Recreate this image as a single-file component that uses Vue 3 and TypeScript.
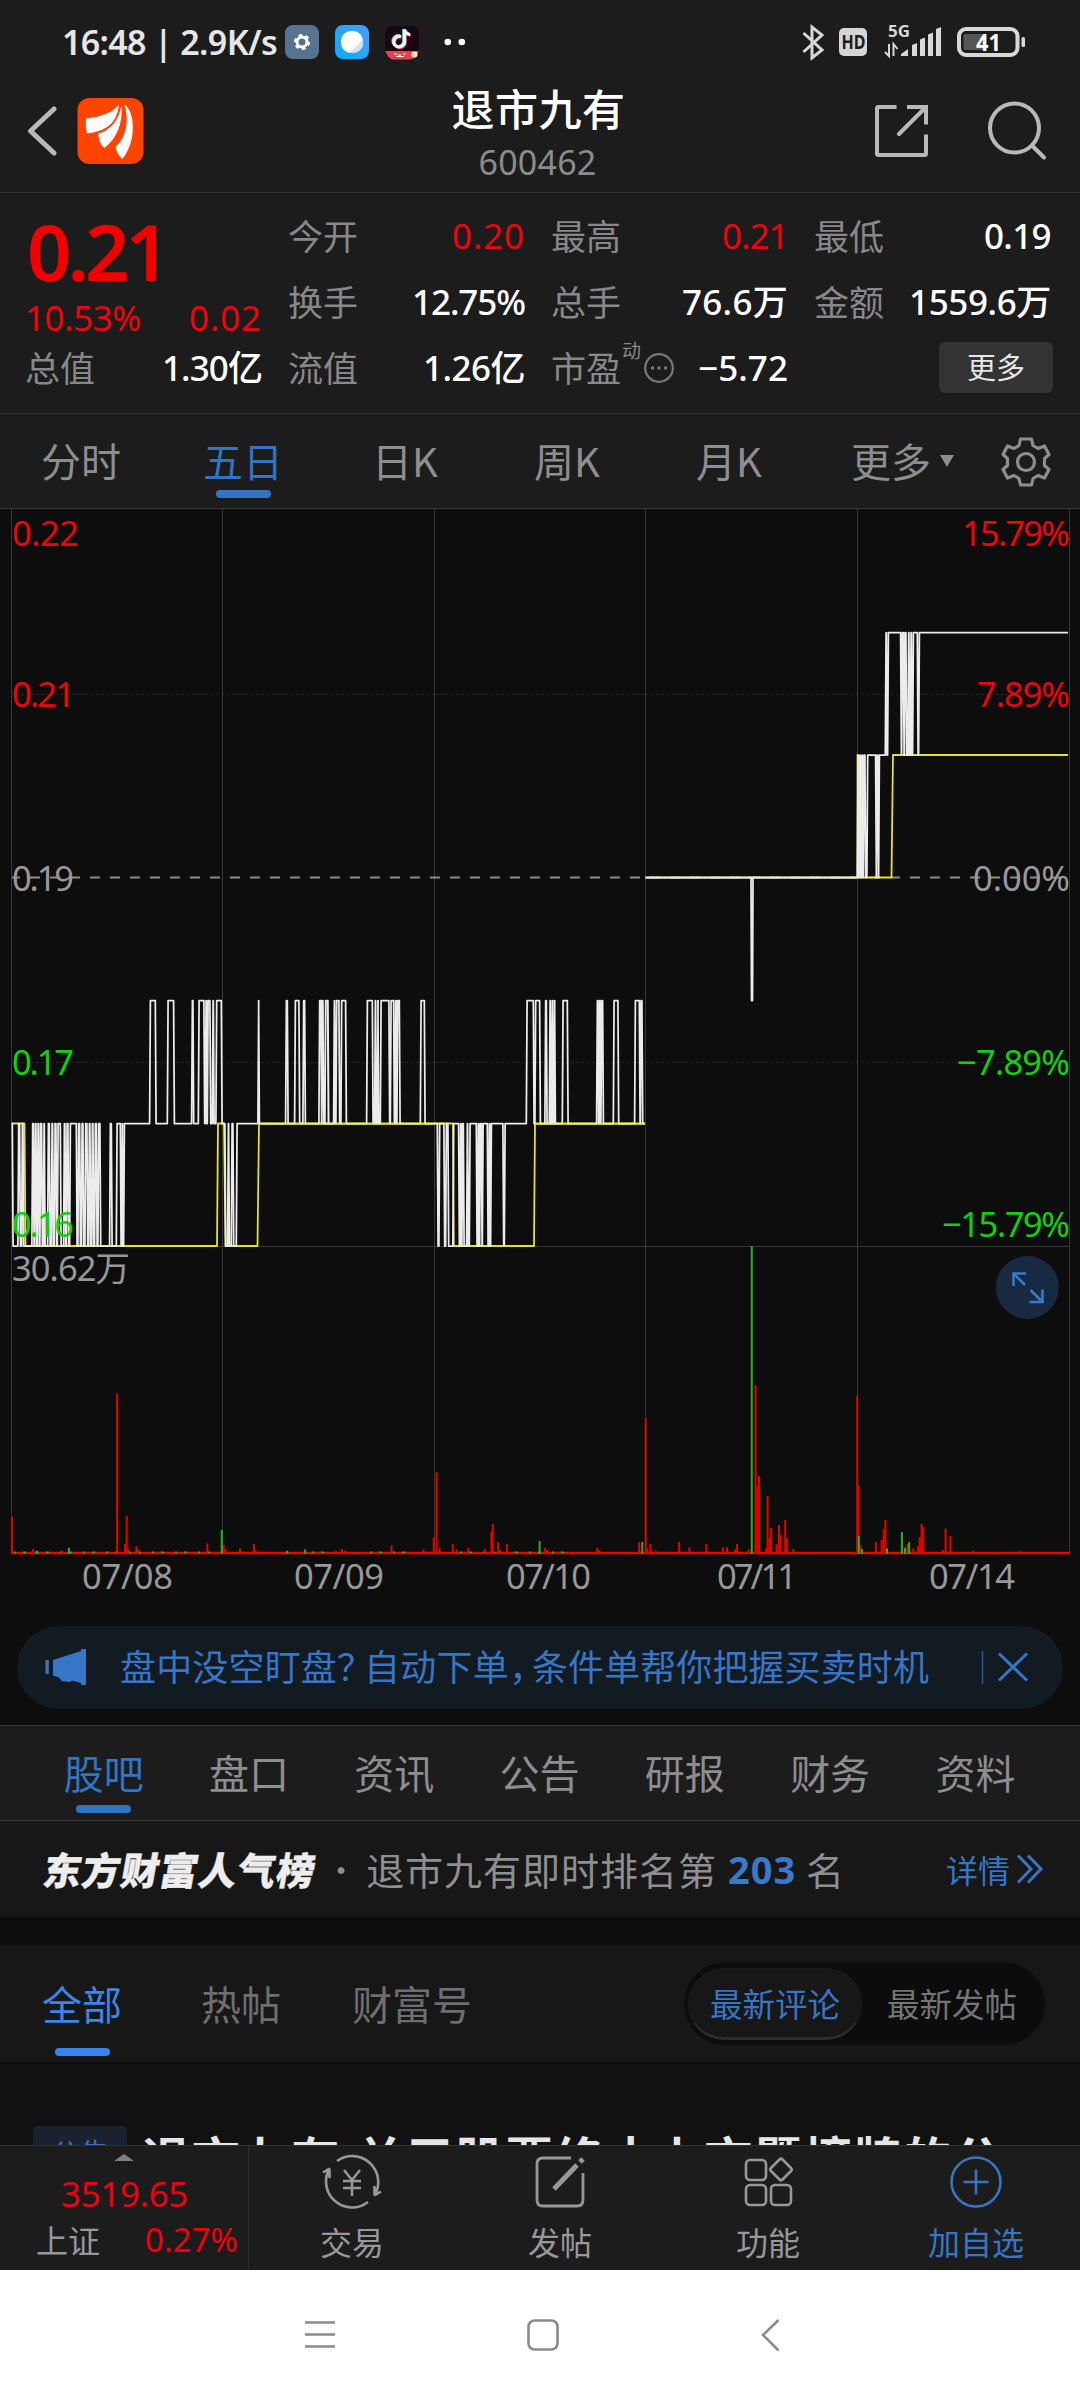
<script setup lang="ts">
interface Bar { x: number; y: number; up: boolean }
interface Label { text: string; x: number; y: number; w: number; tone: string; end?: boolean }

// Spreads the letters of an element so that its line has the given width.
const vFit = {
  mounted(el: HTMLElement, binding: { value: number }) {
    const natural = el.getBoundingClientRect().width
    const count = Array.from(el.textContent ?? '').length
    if (count > 0) el.style.letterSpacing = `${((binding.value - natural) / count).toFixed(3)}px`
  },
}

const periods = ['分时', '五日', '日K', '周K', '月K']
const sections = ['股吧', '盘口', '资讯', '公告', '研报', '财务', '资料']

// Price levels of the chart, in page pixels
const TOP = 632.5
const UPPER = 755
const ZERO = 877.5
const HIGH = 1000.5
const MID = 1123.5
const LOW = 1246

// Square wave that flips between two levels at every given x.
function wave(a: number, b: number, flips: number[]): string {
  let level = a
  return flips
    .map((x) => {
      const from = level
      level = level === a ? b : a
      const lean = 0.4
      return `L${(x - lean).toFixed(1)} ${from}L${(x + lean).toFixed(1)} ${level}`
    })
    .join('')
}
const at = (origin: number, xs: number[]): number[] => xs.map((x) => origin + x / 3)

const day12 =
  `M11.5 ${MID}` +
  wave(MID, LOW, at(0, [38, 55, 60, 66, 70, 97, 101, 105, 109, 113, 117, 121, 126, 131, 134, 144, 149, 155, 159, 164, 169, 173, 182, 192, 196, 200, 205, 210, 230, 235, 240, 245, 250, 256, 262, 267, 271, 276, 280, 285, 290, 295, 301, 330, 335, 350, 362, 366, 368, 372])) +
  wave(MID, HIGH, at(0, [450, 467, 503, 522, 576, 580, 596, 613, 617, 620, 623, 631, 638, 641, 649, 665])) +
  wave(MID, LOW, at(0, [676, 684, 687, 695, 700, 710])) +
  wave(MID, HIGH, at(0, [775, 777, 858, 863, 885, 898, 910, 915, 958, 964, 966, 970, 976, 984])) +
  wave(MID, HIGH, at(320, [16, 25, 42, 45, 49, 58, 64, 78, 141, 158, 165, 168, 173, 175, 182, 208, 212, 222, 226, 229, 232, 239, 302, 314])) +
  `L434 ${MID}`
const day3 =
  `M434 ${MID}` +
  wave(MID, LOW, at(320, [353, 358, 373, 378, 385, 400, 417, 421, 424, 427, 431, 441, 444, 449, 470, 474, 477, 480, 485, 488, 503, 507, 510, 513, 550, 554])) +
  wave(MID, HIGH, at(320, [620, 641, 646, 660, 676, 680, 689, 692, 696, 699, 703, 705, 728, 743, 831, 835, 838, 841, 844, 849, 881, 895, 945, 959, 962, 967])) +
  `L645 ${MID}`
const day45 =
  `M645.5 ${ZERO}L751 ${ZERO}L751.5 ${HIGH}L752.5 ${HIGH}L753 ${ZERO}` +
  wave(ZERO, UPPER, at(620, [713, 716, 719, 722, 725, 728, 731, 736, 742, 768, 770, 774, 777])) +
  `L885 ${UPPER}` +
  wave(UPPER, TOP, at(620, [797, 800, 804, 843, 846, 851, 854, 859, 865, 868, 872, 875, 879, 893, 897])) +
  `L1068 ${TOP}`
const average =
  `M11.5 ${MID}H24.5L25.5 ${LOW}H217L218 ${MID}H224L225.5 ${LOW}H257.5L259 ${MID}H453L453.8 ${LOW}H534L535 ${MID}H645` +
  `M857.5 ${ZERO}V${UPPER}L858.5 ${ZERO}H891.5L893 ${UPPER}H1068`

const left = (list: number[][], up: boolean): Bar[] =>
  list.map(([x, y]) => ({ x: x / 2.904, y: 1230 + y / 3, up }))
const right = (list: number[][], up: boolean): Bar[] =>
  list.map(([x, y]) => ({ x: 540 + x / 2.904, y: 1230 + y / 3, up }))

const bars: Bar[] = [
  ...left([[35, 860], [340, 490], [368, 857], [363, 942], [372, 957], [396, 948], [400, 957], [602, 940], [650, 945], [655, 957], [697, 955], [738, 942], [742, 960], [96, 957], [180, 962], [975, 962], [993, 957], [1002, 962], [1137, 946], [1230, 958], [1260, 922], [1268, 727], [1277, 953], [1315, 942], [1326, 958], [1360, 953], [1408, 957], [1427, 905], [1431, 882], [1447, 936], [1452, 960], [1472, 942]], true),
  ...left([[644, 900], [200, 953], [106, 962], [886, 958], [834, 962], [1567, 933]], false),
  ...right([[15, 953], [21, 960], [166, 953], [172, 960], [288, 936], [307, 565], [312, 955], [321, 942], [336, 962], [404, 936], [434, 952], [483, 942], [531, 952], [543, 952], [572, 942], [567, 958], [606, 958], [626, 466], [631, 770], [636, 738], [657, 955], [661, 798], [666, 925], [671, 894], [687, 942], [694, 885], [699, 915], [712, 870], [717, 925], [736, 957], [921, 497], [925, 765], [931, 945], [976, 936], [992, 930], [998, 898], [1003, 870], [1067, 942], [1084, 955], [1098, 948], [1103, 922], [1108, 882], [1113, 890], [1170, 960], [1178, 896], [1192, 918], [1258, 962], [1395, 962]], true),
  ...right([[297, 936], [615, 48], [926, 918], [935, 957], [1008, 955], [1051, 906], [1060, 953], [1072, 936]], false),
]

const labels: Label[] = [
  { text: '0.22', x: 12, y: 546, w: 67, tone: 'red' },
  { text: '0.21', x: 12, y: 707, w: 63, tone: 'red' },
  { text: '0.19', x: 12, y: 891, w: 62, tone: 'grey' },
  { text: '0.17', x: 12, y: 1075, w: 62, tone: 'green' },
  { text: '0.16', x: 12, y: 1237, w: 62, tone: 'green' },
  { text: '30.62万', x: 12, y: 1281, w: 118, tone: 'grey' },
  { text: '15.79%', x: 1070, y: 546, w: 108, tone: 'red', end: true },
  { text: '7.89%', x: 1070, y: 707, w: 93, tone: 'red', end: true },
  { text: '0.00%', x: 1070, y: 891, w: 97, tone: 'grey', end: true },
  { text: '−7.89%', x: 1070, y: 1075, w: 113, tone: 'green', end: true },
  { text: '−15.79%', x: 1070, y: 1237, w: 128, tone: 'green', end: true },
  { text: '07/08', x: 82, y: 1589, w: 91, tone: 'date' },
  { text: '07/09', x: 294, y: 1589, w: 90, tone: 'date' },
  { text: '07/10', x: 506, y: 1589, w: 85, tone: 'date' },
  { text: '07/11', x: 717, y: 1589, w: 80, tone: 'date' },
  { text: '07/14', x: 929, y: 1589, w: 86, tone: 'date' },
]
const days = [11.5, 222.5, 434.5, 645.5, 857.5, 1069.5]
</script>

<template>
  <div class="screen">
    <div class="status">
      <span class="clock" v-fit="215">16:48 | 2.9K/s</span>
      <svg class="tray" width="186" height="42" viewBox="280 21 186 42">
        <rect x="285" y="25" width="34" height="34" rx="8" fill="#57748f" />
        <circle cx="302" cy="42" r="5" fill="none" stroke="#fff" stroke-width="3" />
        <circle cx="302" cy="42" r="6.9" fill="none" stroke="#fff" stroke-width="2.4" stroke-dasharray="3.6 3.6" />
        <defs>
          <linearGradient id="sky" x1="0" y1="1" x2="1" y2="0">
            <stop offset="0" stop-color="#06adff" /><stop offset="1" stop-color="#4b9dff" />
          </linearGradient>
        </defs>
        <rect x="335" y="25" width="34" height="34" rx="8" fill="url(#sky)" />
        <rect x="341" y="31" width="22" height="22" rx="10" fill="#fff" />
        <path d="M363 38v5a10 10 0 0 1-10 10h-6c8-3 11-8 16-15z" fill="#cfe2f5" />
        <rect x="385" y="26" width="34" height="33" rx="8" fill="#1a0513" />
        <g fill="none" stroke-width="3">
          <path d="M401 36.500a5.400 5.400 0 1 0 3.600 5.200v-12c1 3 3 4.600 5.500 4.800" stroke="#ff2d5a" transform="translate(.8 .8)" />
          <path d="M401 36.500a5.400 5.400 0 1 0 3.600 5.200v-12c1 3 3 4.600 5.500 4.800" stroke="#37e7e7" transform="translate(-1 -.6)" />
          <path d="M401 36.500a5.400 5.400 0 1 0 3.600 5.200v-12c1 3 3 4.600 5.500 4.800" stroke="#fff" />
        </g>
        <path d="M385 51h34l-4 7-5 1.500h-18l-4-3z" fill="#e8404e" />
        <path d="M394 54h3m1 1h3m2-1h3m-10 2.500h8" stroke="#fff" stroke-width="1" />
        <circle cx="414.500" cy="54.500" r="3" fill="#ffe9c0" />
        <circle cx="447.800" cy="42" r="3.300" fill="#fff" /><circle cx="461.800" cy="42" r="3.300" fill="#fff" />
      </svg>
      <svg class="signals" width="230" height="42" viewBox="800 21 230 42">
        <path d="M803.500 33l18.500 17-10 8V27l10 8-18.500 17" fill="none" stroke="#d8d8d8" stroke-width="3" />
        <rect x="839" y="28" width="28" height="28" rx="5" fill="#d5d5d5" />
        <text class="hd" x="841.500" y="49.200" textLength="24" lengthAdjust="spacingAndGlyphs">HD</text>
        <text class="five" x="888" y="37" textLength="22" lengthAdjust="spacingAndGlyphs">5G</text>
        <path d="M885 52l4 4V44M893.500 56V44l4 5" fill="none" stroke="#d8d8d8" stroke-width="2" />
        <path d="M901 56v-2l7-5v7zM912 56V45l5-2v13zM920 56V39.500l5-2V56zM928 56V34.500l5-2V56zM936 56V29l5-2v29z" fill="#d8d8d8" />
        <rect x="959" y="29" width="58.500" height="26" rx="7" fill="none" stroke="#d8d8d8" stroke-width="4" />
        <rect x="963.500" y="34" width="21" height="16" rx="2" fill="#565656" />
        <rect x="1021.500" y="37" width="3.500" height="10" rx="1.500" fill="#d8d8d8" />
        <text class="charge" x="976" y="50.500" textLength="25" lengthAdjust="spacingAndGlyphs">41</text>
      </svg>
    </div>

    <header class="head">
      <svg width="120" height="80" viewBox="27 91 120 80">
        <path d="M54 109L30.500 131 54 153" fill="none" stroke="#b9b9b9" stroke-width="5" stroke-linecap="round" stroke-linejoin="round" />
        <rect x="77.500" y="98" width="66" height="66" rx="12" fill="#ff4300" />
        <path d="M86 118.500Q110 116 119 104.500C117 123 107 131 87 133.500Q85 126 86 118.500z" fill="#fff" />
        <path d="M121.500 104.500C123 124 117 138 104.500 148 100 144 98.500 139 98.500 133.500 111 130 119.500 120 121.500 104.500z" fill="#fff" />
        <path d="M124.500 104.500C135 111 137 141 122.500 159 119 156 116.500 152 115.500 147 126 138 129.500 121 124.500 104.500z" fill="#fff" />
      </svg>
      <div class="title">
        <h1 v-fit="174">退市九有</h1>
        <span v-fit="118">600462</span>
      </div>
      <svg width="176" height="70" viewBox="872 96 176 70" fill="none" stroke="#b9b9b9" stroke-width="4">
        <path d="M896.500 107H878.500q-1.500 0-1.500 1.500V153.500q0 1.500 1.500 1.500H924.500q1.500 0 1.500-1.500V134.500M907 107H926V124.500" />
        <path d="M926 107L899 134" stroke-linecap="round" />
        <circle cx="1014.500" cy="128" r="24.500" /><path d="M1032 145.500l12 12" stroke-linecap="round" />
      </svg>
    </header>

    <section class="quote">
      <div class="col">
        <div class="price"><b v-fit="139">0.21</b></div>
        <div class="row lower"><span class="up" v-fit="116">10.53%</span><span class="up" v-fit="73">0.02</span></div>
        <div class="row"><i>总值</i><span v-fit="100">1.30亿</span></div>
      </div>
      <div class="col">
        <div class="row"><i>今开</i><span class="up" v-fit="73">0.20</span></div>
        <div class="row"><i>换手</i><span v-fit="113">12.75%</span></div>
        <div class="row"><i>流值</i><span v-fit="102">1.26亿</span></div>
      </div>
      <div class="col">
        <div class="row"><i>最高</i><span class="up" v-fit="66">0.21</span></div>
        <div class="row"><i>总手</i><span v-fit="106">76.6万</span></div>
        <div class="row">
          <i>市盈</i><small>动</small>
          <svg width="32" height="32" viewBox="0 0 32 32"><circle cx="16" cy="16" r="13.800" fill="none" stroke="#77777a" stroke-width="2.300" /><path d="M8 14.500h3v3H8zM14.500 14.500h3v3h-3zM21 14.500h3v3h-3z" fill="#77777a" /></svg>
          <span v-fit="90">−5.72</span>
        </div>
      </div>
      <div class="col">
        <div class="row"><i>最低</i><span v-fit="67">0.19</span></div>
        <div class="row"><i>金额</i><span v-fit="142">1559.6万</span></div>
        <div class="row end"><button>更多</button></div>
      </div>
    </section>

    <nav class="periods">
      <div v-for="(p, i) in periods" :key="p" class="period" :class="{ on: i === 1 }">{{ p }}</div>
      <div class="period more">更多<em></em></div>
      <div class="gear">
        <svg width="56" height="56" viewBox="-28 -28 56 56" fill="none" stroke="#8e8e91" stroke-width="3.200" stroke-linejoin="round">
          <path d="M-5.500-23H5.500L7-16.500 12-13.500 18.500-16 23-7.500 18.500-3.500V3.500L23 7.500 18.500 16 12 13.500 7 16.500 5.500 23H-5.500L-7 16.500-12 13.500-18.500 16-23 7.500-18.500 3.500V-3.500L-23-7.500-18.500-16-12-13.500-7-16.500z" />
          <circle r="8.500" />
        </svg>
      </div>
    </nav>

    <svg class="chart" width="1080" height="1117" viewBox="0 509 1080 1117">
      <g stroke="#38383a" stroke-width="1">
        <line v-for="x in days" :key="x" :x1="x" :x2="x" y1="509" y2="1553" />
        <line x1="11" x2="1070" y1="1246.500" y2="1246.500" />
        <line x1="11" x2="1070" y1="694.500" y2="694.500" stroke="#252527" stroke-dasharray="3 2" />
        <line x1="11" x2="1070" y1="1062.500" y2="1062.500" stroke="#252527" stroke-dasharray="3 2" />
      </g>
      <line x1="12" x2="1069" :y1="ZERO" :y2="ZERO" stroke="#8c8c8c" stroke-width="2" stroke-dasharray="10 10" stroke-dashoffset="2" />
      <g fill="none" stroke-linejoin="round">
        <path :d="average" stroke="#e6df2c" stroke-width="1.800" />
        <path :d="day12 + day3 + day45" stroke="#ececec" stroke-width="1.750" />
        <path d="M259 1124.200H434M535 1124.200H645" stroke="#e6df2c" stroke-width="1" />
        <path d="M645.500 877.500H857" stroke="#f1eec0" stroke-width="2" />
      </g>
      <path d="M11 1553H1070" stroke="#f00000" stroke-width="2.400" />
      <path d="M14 1552.500H222M312 1552.500h22M370 1552.500h38M460 1552.500h110" stroke="#16b416" stroke-width="2" stroke-dasharray="2 7 3 11" />
      <line v-for="(b, i) in bars" :key="i" :x1="b.x" :x2="b.x" :y1="b.y" y2="1554" :stroke="b.up ? '#e60000' : '#22b422'" stroke-width="2" />
      <text v-for="l in labels" :key="l.text" :class="l.tone" :x="l.end ? l.x - l.w : l.x" :y="l.y" :textLength="l.w">{{ l.text }}</text>
      <circle cx="1027.300" cy="1287.500" r="31.500" fill="#182a41" />
      <path d="M1013.500 1286V1273.500H1026M1013.500 1273.500L1025 1285M1042.500 1289.500V1302H1029.500M1042.500 1302L1030.500 1290" fill="none" stroke="#3a78c8" stroke-width="2.600" />
    </svg>

    <div class="tip">
      <svg width="46" height="42" viewBox="42 1647 46 42" fill="#3775c6">
        <path d="M45.500 1660h3.300v14h-3.300zM53 1660l28-9v-2h5v36h-5v-2l-9-2.500-2 1.500-8-.800-3-3.700-6-2z" />
      </svg>
      <p><span v-fit="217">盘中没空盯盘</span><span class="q">？</span><span v-fit="145">自动下单</span><span class="c">，</span><span v-fit="397">条件单帮你把握买卖时机</span></p>
      <svg width="50" height="40" viewBox="978 1648 50 40" fill="none" stroke="#3775c6">
        <path d="M982.500 1651v33" stroke-width="1.500" stroke="#2c5a96" /><path d="M999 1653.500l28 27M1027 1653.500l-28 27" stroke-width="3" />
      </svg>
    </div>

    <nav class="sections">
      <div v-for="(s, i) in sections" :key="s" class="period" :class="{ on: i === 0 }">{{ s }}</div>
    </nav>

    <div class="rank">
      <strong v-fit="288">东方财富人气榜</strong>
      <b class="dot">·</b>
      <span v-fit="351">退市九有即时排名第</span>
      <b class="place" v-fit="68">203</b>
      <span>名</span>
      <a>详情<svg width="28" height="32" viewBox="0 0 28 32" fill="none" stroke="#3775c6" stroke-width="3"><path d="M2 2.500l13 13.500L2 29.500M12 2.500L25 16 12 29.500" /></svg></a>
    </div>

    <div class="filter">
      <div class="tab first">全部</div>
      <div class="tab second">热帖</div>
      <div class="tab">财富号</div>
      <div class="switch"><span class="pill">最新评论</span><span class="off">最新发帖</span></div>
    </div>

    <div class="feed">
      <span class="tag">公告</span>
      <h2><span v-fit="199">退市九有</span><span v-fit="15">:</span><span v-fit="647">关于股票终止上市暨摘牌的公</span></h2>
    </div>

    <footer class="dock">
      <div class="index">
        <em></em>
        <div class="value"><span v-fit="127">3519.65</span></div>
        <div class="change"><i>上证</i><span v-fit="93">0.27%</span></div>
      </div>
      <div class="action">
        <svg width="64" height="60" viewBox="-32 -30 64 60" fill="none" stroke="#98989a" stroke-width="2.600">
          <path d="M-15-21A26 26 0 0 1 22.500 13.500L29 9.500M22.500 13.500V4M16 20A26 26 0 0 1-22.500-13.500L-29-9.500M-22.500-13.500V-4" />
          <path d="M-8-12L0-2 8-12M0-2V14M-9-1H9M-9 6H9" />
        </svg>交易
      </div>
      <div class="action">
        <svg width="64" height="60" viewBox="-32 -30 64 60" fill="none" stroke="#98989a" stroke-width="2.800">
          <path d="M11-24H-17Q-23-24-23-18V18Q-23 24-17 24H17Q23 24 23 18V-9" />
          <path d="M-6 7L17-17" stroke-width="5" /><path d="M20-20L23-23" stroke-width="5" />
        </svg>发帖
      </div>
      <div class="action">
        <svg width="64" height="60" viewBox="-32 -30 64 60" fill="none" stroke="#98989a" stroke-width="2.600">
          <rect x="-22" y="-22" width="20" height="20" rx="4" /><rect x="-22" y="3" width="20" height="20" rx="4" /><rect x="3" y="3" width="20" height="20" rx="4" />
          <path d="M11.500-22.500Q13-24 14.500-22.500L23-14Q24.500-12.500 23-11L14.500-2.500Q13-1 11.500-2.500L3-11Q1.500-12.500 3-14z" />
        </svg>功能
      </div>
      <div class="action blue">
        <svg width="64" height="60" viewBox="-32 -30 64 60" fill="none" stroke="#3775c6" stroke-width="2.600">
          <circle r="24.500" /><path d="M-12.500 0H12.500M0-12.500V12.500" />
        </svg>加自选
      </div>
    </footer>

    <div class="system">
      <svg width="1080" height="130" viewBox="0 2270 1080 130" fill="none" stroke="#8b8b8b" stroke-width="2.600">
        <path d="M305 2322.500h30M305 2334.500h30M305 2346.500h30" />
        <rect x="528.500" y="2320.500" width="29" height="29" rx="6" />
        <path d="M778.500 2320L763 2335l15.500 15.500" />
      </svg>
    </div>
  </div>
</template>

<style>
body { background: #0d0d0d; }
</style>

<style scoped>
.screen { width: 1080px; height: 2400px; overflow: hidden; display: flex; flex-direction: column; background: #0d0d0d; color: #fff; font-family: "Noto Sans", "Noto Sans CJK SC", sans-serif; font-size: 35px; }
.screen > * { box-sizing: border-box; flex: none; }
svg { display: block; flex: none; }
i, em { font-style: normal; }
span, b, strong, i, h1 { white-space: nowrap; }
.status { height: 84px; background: #1c1c1c; display: flex; align-items: center; padding-left: 62px; }
.clock { font-size: 34px; font-weight: 600; color: #e6e6e6; line-height: 42px; display: block; width: max-content; }
.tray { margin-left: 3px; }
.signals { margin-left: auto; margin-right: 50px; }
.hd { font: 700 20px "Noto Sans", sans-serif; fill: #1c1c1c; }
.five { font: 700 16px "Noto Sans", sans-serif; fill: #d8d8d8; }
.charge { font: 700 23px "Noto Sans", sans-serif; fill: #fff; }

.head { height: 109px; background: #1c1c1c; border-bottom: 1px solid #333; display: flex; justify-content: space-between; padding: 7px 32px 0 27px; align-items: flex-start; }
.head > svg:last-child { margin-top: 5px; }
.title { display: flex; flex-direction: column; align-items: center; margin-left: 58px; margin-top: -9px; }
.title h1 { margin: 0; font: 500 43px/50px "Noto Sans CJK SC", sans-serif; }
.title span { font-size: 34px; line-height: 44px; margin-top: 8px; margin-left: -2px; color: #8c8c8c; }

.quote { height: 221px; background: #1c1c1c; border-bottom: 1px solid #333; display: grid; grid-template-columns: repeat(4, 236px); column-gap: 27px; padding: 10px 0 0 26px; }
.row { height: 66px; display: flex; align-items: center; justify-content: space-between; font-weight: 500; }
.row i { font: 400 35px/66px "Noto Sans CJK SC", sans-serif; color: #88888b; margin: -3px 0 0 -1px; }
.row span { line-height: 66px; }
.row .up { font-weight: 400; color: #f0040c; }
.row small { font: 19px/20px "Noto Sans CJK SC", sans-serif; color: #88888b; margin: -36px 0 0 1px; }
.row svg { margin: 0 auto 0 2px; }
.row.lower { height: 48px; }
.lower span { line-height: 48px; margin: 14px 0 0 -1px; }
.price { height: 84px; }
.price b { display: inline-block; font-size: 78px; line-height: 72px; font-weight: 600; color: #f50000; margin: 12px 0 0 1px; vertical-align: top; }
.end { justify-content: flex-end; }
.end button { width: 114px; height: 51px; margin-right: -2px; margin-top: -2px; padding: 0 0 2px; border: 0; border-radius: 6px; background: #333; color: #e8e8e8; font: 29px/46px "Noto Sans CJK SC", sans-serif; }

.periods, .sections { height: 95px; background: #1c1c1c; border-bottom: 1px solid #3a3a3b; display: flex; }
.period { position: relative; width: 162px; text-align: center; font: 40px/92px "Noto Sans CJK SC", sans-serif; color: #8e8e91; }
.period.on { color: #3173c5; }
.period.on::after { content: ""; position: absolute; left: 50%; margin-left: -27.500px; top: 76px; width: 55px; height: 8px; border-radius: 4px; background: #3173c5; }
.more { white-space: nowrap; }
.more em { position: absolute; right: 18px; top: 41px; border: 7px solid transparent; border-top: 12px solid #8e8e91; border-bottom: 0; }
.gear { width: 108px; display: grid; place-items: center; padding-top: 2px; box-sizing: border-box; }

.chart text { font-family: "Noto Sans", "Noto Sans CJK SC", sans-serif; font-size: 34.500px; }
.red { fill: #f0040c; }
.green { fill: #10d010; }
.grey, .date { fill: #98989a; }

.tip { height: 83px; margin: 0 17px 16px; border-radius: 42px; background: #121a22; display: flex; align-items: center; padding-left: 25px; color: #3775c6; font: 36px/76px "Noto Sans CJK SC", sans-serif; }
.tip p { margin: -1px 0 0 32px; width: 858px; white-space: nowrap; height: 80px; }
.tip .q { letter-spacing: -9px; }
.tip .c { letter-spacing: -13px; }
.tip span { display: inline-block; }

.sections { height: 96px; border-top: 1px solid #3a3a3b; padding-left: 31px; }
.sections .period { width: 145.300px; line-height: 92px; }
.sections .period.on::after { top: 79px; }

.rank { height: 96px; background: #171717; display: flex; align-items: center; padding: 0 36px 0 44px; font: 38px/90px "Noto Sans CJK SC", sans-serif; color: #8f8f92; }
.rank strong { font-weight: 900; font-size: 38px; color: #ededed; transform: skewX(-10deg); -webkit-text-stroke: .4px #ededed; }
.rank .dot { width: 50px; text-align: center; font-weight: 400; font-size: 32px; }
.rank .place { font: 700 38px/90px "Noto Sans", sans-serif; color: #3b78c8; margin: 0 10px 0 11px; }
.rank a { margin-left: auto; display: flex; align-items: center; font-size: 32px; color: #3775c6; gap: 6px; }

.filter { height: 118px; margin-top: 28px; background: #171717; display: flex; padding-left: 42px; border-bottom: 1px solid #0c0c0c; }
.tab { font: 40px/116px "Noto Sans CJK SC", sans-serif; color: #6e6e70; }
.first { position: relative; color: #3b86e8; width: 159px; }
.first::after { content: ""; position: absolute; left: 13px; top: 103px; width: 55px; height: 8px; border-radius: 4px; background: #3784ea; }
.second { width: 151px; }
.switch { margin: 17px 35px 0 auto; width: 361px; height: 83px; border-radius: 42px; background: #0c0c0c; box-sizing: border-box; padding: 6px 4px; display: flex; font: 32.500px/68px "Noto Sans CJK SC", sans-serif; color: #757578; }
.pill { box-sizing: border-box; width: 174px; height: 72px; border-radius: 36px; background: #171717; border: 1px solid #1c1c1c; border-bottom: 3px solid #2c2c2c; text-align: center; color: #3775c6; }
.off { padding: 1px 0 0 25px; }

.feed { height: 82px; background: #111; overflow: hidden; display: flex; align-items: flex-start; }
.tag { margin: 63px 0 0 33px; width: 94px; height: 50px; border-radius: 5px; background: #1a2230; color: #3a70bb; font: 29px/52px "Noto Sans CJK SC", sans-serif; text-align: center; }
.feed h2 { margin: 58px 0 0 15px; font: 700 48px/70px "Noto Sans CJK SC", sans-serif; color: #e6e6e6; white-space: nowrap; }
.feed h2 span { display: inline-block; }

.dock { height: 125px; background: #1c1c1c; border-top: 1px solid #333; display: flex; }
.index { width: 249px; margin-right: -1px; border-right: 1px solid #303030; position: relative; box-sizing: border-box; color: #f00010; }
.index em { position: absolute; left: 114px; top: 8px; border: 10px solid transparent; border-bottom: 7px solid #808083; border-top: 0; }
.value { padding: 27px 0 0 61px; height: 45px; line-height: 42px; }
.change { display: flex; align-items: center; padding: 0 10px 0 36px; justify-content: space-between; line-height: 44px; font-size: 33px; }
.change i { font: 32px/44px "Noto Sans CJK SC", sans-serif; color: #98989a; margin-top: -2px; }
.action { width: 208px; display: flex; flex-direction: column; align-items: center; padding-top: 6px; box-sizing: border-box; font: 32px/48px "Noto Sans CJK SC", sans-serif; color: #98989a; gap: 5px; }
.blue { color: #3775c6; }
.system { height: 131px; background: #fff; }
</style>
